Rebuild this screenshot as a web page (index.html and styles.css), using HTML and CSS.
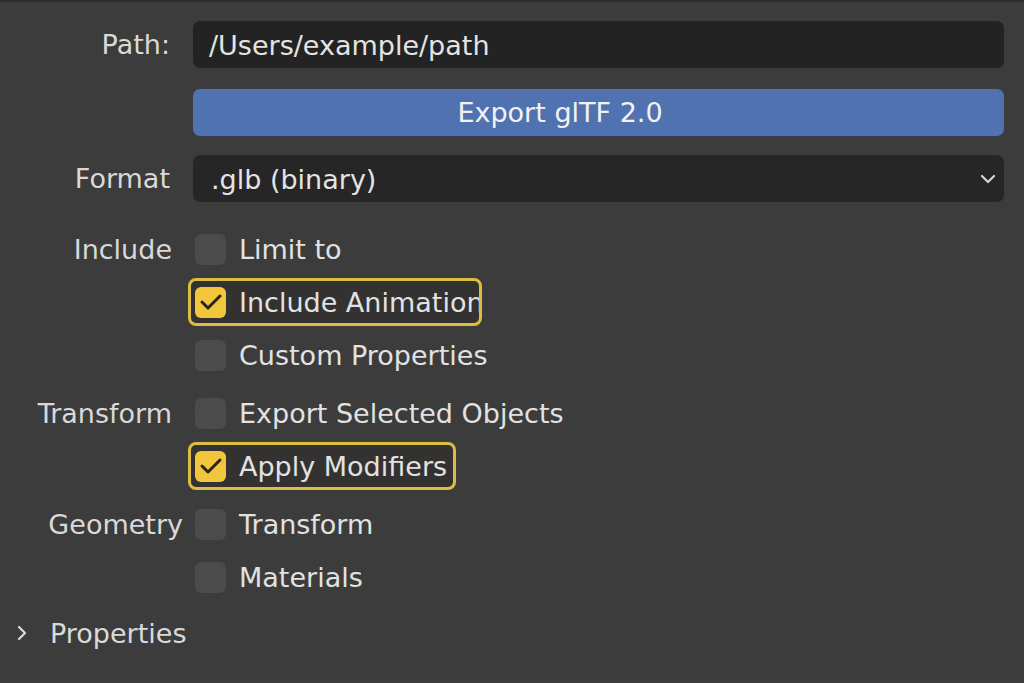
FILE: index.html
```html
<!DOCTYPE html>
<html>
<head>
<meta charset="utf-8">
<link rel="stylesheet" href="styles.css">
</head>
<body>
<div class="panel">
  <div class="row field-row">
    <div class="label">Path:</div>
    <div class="field text-field">/Users/example/path</div>
  </div>
  <div class="row field-row gap-btn">
    <div class="label"></div>
    <div class="field button">Export glTF 2.0</div>
  </div>
  <div class="row field-row gap-fmt">
    <div class="label">Format</div>
    <div class="field dropdown">
      <span>.glb (binary)</span>
      <svg class="chev-down" width="16" height="10" viewBox="0 0 16 10"><polyline points="2,2 8,8 14,2" fill="none" stroke="#d6d6d6" stroke-width="2.2" stroke-linecap="round" stroke-linejoin="round"/></svg>
    </div>
  </div>

  <div class="group first">
    <div class="row check-row">
      <div class="label">Include</div>
      <div class="check"><span class="box"></span><span class="ctext">Limit to</span></div>
    </div>
    <div class="row check-row">
      <div class="label"></div>
      <div class="check on clip"><span class="box"><svg width="26" height="20" viewBox="0 0 26 20"><polyline points="4,10 10,16 22,4" fill="none" stroke="#2b2418" stroke-width="3" stroke-linecap="round" stroke-linejoin="round"/></svg></span><span class="ctext">Include Animation</span></div>
    </div>
    <div class="row check-row">
      <div class="label"></div>
      <div class="check"><span class="box"></span><span class="ctext">Custom Properties</span></div>
    </div>
  </div>

  <div class="group">
    <div class="row check-row">
      <div class="label">Transform</div>
      <div class="check"><span class="box"></span><span class="ctext">Export Selected Objects</span></div>
    </div>
    <div class="row check-row">
      <div class="label"></div>
      <div class="check on"><span class="box"><svg width="26" height="20" viewBox="0 0 26 20"><polyline points="4,10 10,16 22,4" fill="none" stroke="#2b2418" stroke-width="3" stroke-linecap="round" stroke-linejoin="round"/></svg></span><span class="ctext">Apply Modifiers</span></div>
    </div>
  </div>

  <div class="group">
    <div class="row check-row">
      <div class="label wide">Geometry</div>
      <div class="check"><span class="box"></span><span class="ctext">Transform</span></div>
    </div>
    <div class="row check-row">
      <div class="label"></div>
      <div class="check"><span class="box"></span><span class="ctext">Materials</span></div>
    </div>
  </div>

  <div class="section">
    <svg class="chev-right" width="12" height="18" viewBox="0 0 12 18"><polyline points="3,3 9,9 3,15" fill="none" stroke="#d6d6d6" stroke-width="2.3" stroke-linecap="round" stroke-linejoin="round"/></svg>
    <span>Properties</span>
  </div>
</div>
</body>
</html>
```

FILE: styles.css
```css
html, body {
  margin: 0;
  padding: 0;
  background: #3c3c3c;
}
body {
  width: 1024px;
  height: 683px;
  overflow: hidden;
  border-top: 2px solid #2c2c2c;
  box-sizing: border-box;
  font-family: "DejaVu Sans", "Liberation Sans", sans-serif;
  font-size: 27px;
  color: #e2e2e2;
}
.panel {
  padding: 19px 20px 0 0;
}
.row {
  display: grid;
  grid-template-columns: 170px 1fr;
  align-items: center;
}
.field-row {
  column-gap: 23px;
}
.gap-btn { margin-top: 21px; }
.gap-fmt { margin-top: 19px; }
.label {
  text-align: right;
  color: #d9d9d9;
  white-space: nowrap;
}
.field {
  height: 47px;
  border-radius: 7px;
  display: flex;
  align-items: center;
  box-sizing: border-box;
}
.text-field {
  background: #232323;
  padding: 1px 0 0 16px;
  color: #e4e4e4;
}
.button {
  background: #5072b0;
  justify-content: center;
  padding-right: 77px;
  color: #f2f2f2;
  box-shadow: 0 1px 0 #2f3b52;
}
.dropdown {
  background: #262626;
  padding: 1px 8px 0 18px;
  justify-content: space-between;
  color: #e4e4e4;
}
.chev-down {
  display: block;
}
.group {
  margin-top: 6px;
}
.group.first {
  margin-top: 21px;
}
.check-row {
  height: 52px;
  column-gap: 18px;
  margin-bottom: 1px;
}
.check-row .label {
  margin-right: -2px;
}
.check-row .label.wide {
  margin-right: -13px;
}
.check {
  justify-self: start;
  display: flex;
  align-items: center;
  height: 48px;
  box-sizing: border-box;
  border: 3px solid transparent;
  border-radius: 8px;
  padding: 0 6px 0 4px;
  white-space: nowrap;
}
.check.on {
  border-color: #dcbd3f;
  background: #333231;
}
.check.clip {
  width: 294px;
  overflow: hidden;
  padding-right: 0;
}
.box {
  width: 31px;
  height: 31px;
  border-radius: 6px;
  background: #4b4b4b;
  flex: none;
  display: flex;
  align-items: center;
  justify-content: center;
  margin-right: 13px;
}
.check.on .box {
  background: #f1c63d;
}
.box svg {
  display: block;
}
.ctext {
  color: #e2e2e2;
}
.section {
  display: flex;
  align-items: center;
  height: 52px;
  margin-top: 4px;
  padding-left: 16px;
  color: #dadada;
}
.chev-right {
  display: block;
  margin-right: 22px;
}
```
